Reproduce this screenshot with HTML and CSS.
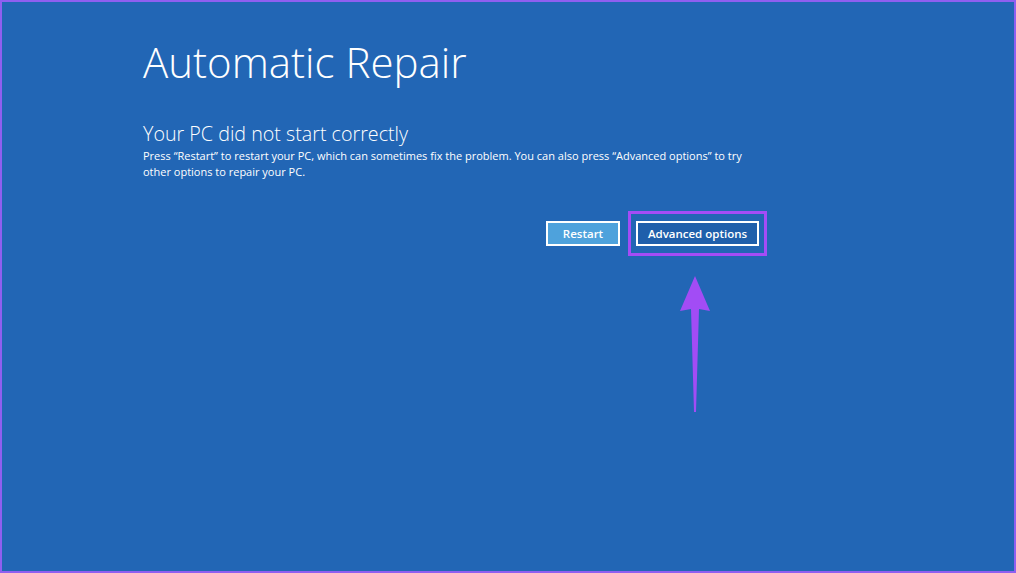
FILE: index.html
```html
<!DOCTYPE html>
<html lang="en">
<head>
<meta charset="utf-8">
<title>Automatic Repair</title>
<link rel="stylesheet" href="styles.css">
</head>
<body>
<div class="screen">
  <div class="content">
    <h1 class="title">Automatic Repair</h1>
    <h2 class="subtitle">Your PC did not start correctly</h2>
    <p class="desc">Press “Restart” to restart your PC, which can sometimes fix the problem. You can also press “Advanced options” to try<br>other options to repair your PC.</p>
    <div class="actions">
      <button class="btn btn-primary">Restart</button>
      <div class="highlight-wrap">
        <button class="btn btn-secondary">Advanced options</button>
        <span class="highlight"></span>
        <svg class="arrow" width="40" height="140" viewBox="0 0 40 140">
          <path d="M20 0 L35 35 L24 33 L21 136 L19 136 L16 33 L5 35 Z" fill="#a24cf5"/>
        </svg>
      </div>
    </div>
  </div>
</div>
</body>
</html>
```
FILE: styles.css
```css
html, body {
  margin: 0;
  padding: 0;
}
body {
  width: 1016px;
  height: 573px;
  overflow: hidden;
}
.screen {
  box-sizing: border-box;
  width: 1016px;
  height: 573px;
  border: 2px solid #8f5ff0;
  background: #2266b5;
  color: #ffffff;
  font-family: "Open Sans", "Noto Sans", sans-serif;
}
.content {
  width: 616px;
  padding: 30px 0 0 141px;
}
.title {
  margin: 0;
  font-size: 42px;
  font-weight: 300;
  line-height: 60px;
  letter-spacing: 0;
}
.subtitle {
  margin: 28px 0 0 0;
  font-size: 19.7px;
  font-weight: 300;
  line-height: 28px;
}
.desc {
  margin: 0;
  font-size: 11px;
  line-height: 16px;
  white-space: nowrap;
}
.actions {
  display: flex;
  justify-content: flex-end;
  gap: 16px;
  margin-top: 41px;
}
.btn {
  box-sizing: border-box;
  height: 25px;
  border: 2px solid #ffffff;
  color: #ffffff;
  font-family: "Open Sans", "Noto Sans", sans-serif;
  font-size: 11.5px;
  font-weight: 600;
  padding: 0;
  cursor: pointer;
}
.btn-primary {
  width: 74px;
  background: #4ea2dc;
}
.btn-secondary {
  width: 123px;
  background: #1f5fab;
}
.highlight-wrap {
  position: relative;
  display: flex;
}
.highlight {
  position: absolute;
  left: -8px;
  top: -10px;
  right: -8px;
  bottom: -10px;
  border: 3px solid #a44cf6;
}
.arrow {
  position: absolute;
  left: 39px;
  top: 55px;
}
```
